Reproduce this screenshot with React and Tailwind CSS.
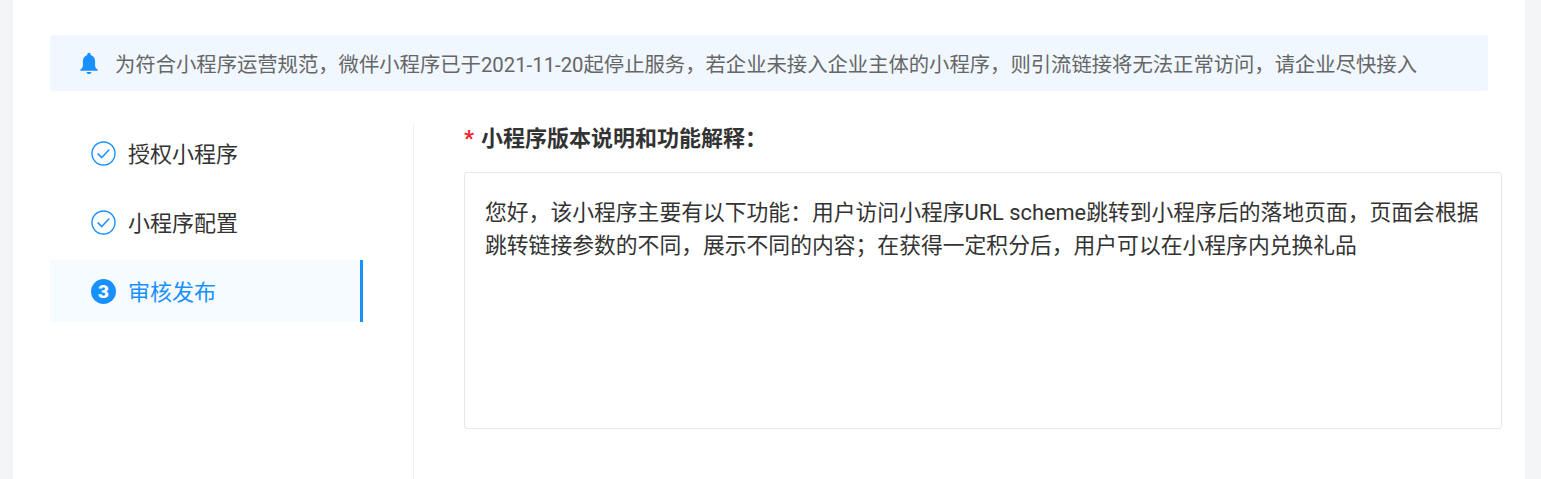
const FONT = "font-['Roboto','Noto_Sans_CJK_SC',sans-serif]";

function CheckIcon() {
  return (
    <svg width="25" height="25" viewBox="0 0 25 25" fill="none" className="shrink-0">
      <circle cx="12.5" cy="12.5" r="11.5" stroke="#1890ff" strokeWidth="1.4" />
      <path d="M7 12.900l3.800 3.700 7-7.600" stroke="#1890ff" strokeWidth="1.5" strokeLinecap="round" strokeLinejoin="round" />
    </svg>
  );
}

function StepRow({ done, number, label, active }) {
  return (
    <div
      className={
        active
          ? "flex h-[62px] items-center gap-[12px] border-r-[3px] border-[#1890ff] bg-[#f6fbff] pl-[41px] text-[#1890ff]"
          : "flex h-[62px] items-center gap-[12px] pl-[41px] text-[#333333]"
      }
    >
      {done ? (
        <CheckIcon />
      ) : (
        <span className="flex h-[25px] w-[25px] shrink-0 items-center justify-center rounded-full bg-[#1890ff] text-[19px] font-black leading-none text-white">
          {number}
        </span>
      )}
      <span className="pt-[4px] text-[22px] leading-[30px]">{label}</span>
    </div>
  );
}

export default function App() {
  return (
    <div className={`h-[479px] overflow-hidden bg-[#f4f5f7] pl-[13px] pr-[16px] ${FONT}`}>
      <div className="h-full bg-white pl-[37px] pt-[35px]">
        <div className="mr-[37px] flex h-[56px] items-center gap-[15px] rounded-[3px] bg-[#f0f7fe] pl-[28px] text-[#666666]">
          <svg width="22" height="23" viewBox="0 0 22 23" className="shrink-0">
            <path
              fill="#1890ff"
              d="M11 .8c-1 0-1.700.7-1.700 1.700v.6C6.600 3.900 4.900 6.300 4.900 9.300v4.500c0 1.300-.9 2.600-2.500 3.800-.6.5-.3 1.200.4 1.200h16.400c.7 0 1-.7.4-1.200-1.600-1.200-2.500-2.500-2.500-3.800V9.300c0-3-1.700-5.400-4.400-6.200v-.6C12.700 1.500 12 .8 11 .8zM8.400 19.900c.3 1.200 1.300 2.100 2.600 2.100s2.300-.9 2.600-2.100z"
            />
          </svg>
          <span className="whitespace-nowrap pt-[4px] text-[20.33px] leading-[28px]">
            为符合小程序运营规范，微伴小程序已于2021-11-20起停止服务，若企业未接入企业主体的小程序，则引流链接将无法正常访问，请企业尽快接入
          </span>
        </div>
        <div className="mt-[32px] flex h-[400px]">
          <div className="-mt-[1px] w-[363px] shrink-0 pr-[50px]">
            <StepRow done label="授权小程序" />
            <div className="h-[7px]" />
            <StepRow done label="小程序配置" />
            <div className="h-[7px]" />
            <StepRow number="3" label="审核发布" active />
          </div>
          <div className="w-[51px] shrink-0 border-l border-[#f0f0f0]" />
          <div className="w-[1038px] shrink-0">
            <div className="flex h-[30px] items-center pt-[2px] text-[22px] font-bold leading-[30px] text-[#333333]">
              <span className="mr-[7px] text-[#f5222d]">*</span>
              <span>小程序版本说明和功能解释：</span>
            </div>
            <div className="mt-[19px] h-[257px] rounded-[3px] border border-[#e8e8e8] px-[20px] pt-[23px] text-[21.8px] leading-[33px] text-[#333333]">
              您好，该小程序主要有以下功能：用户访问小程序URL scheme跳转到小程序后的落地页面，页面会根据跳转链接参数的不同，展示不同的内容；在获得一定积分后，用户可以在小程序内兑换礼品
            </div>
          </div>
        </div>
      </div>
    </div>
  );
}
